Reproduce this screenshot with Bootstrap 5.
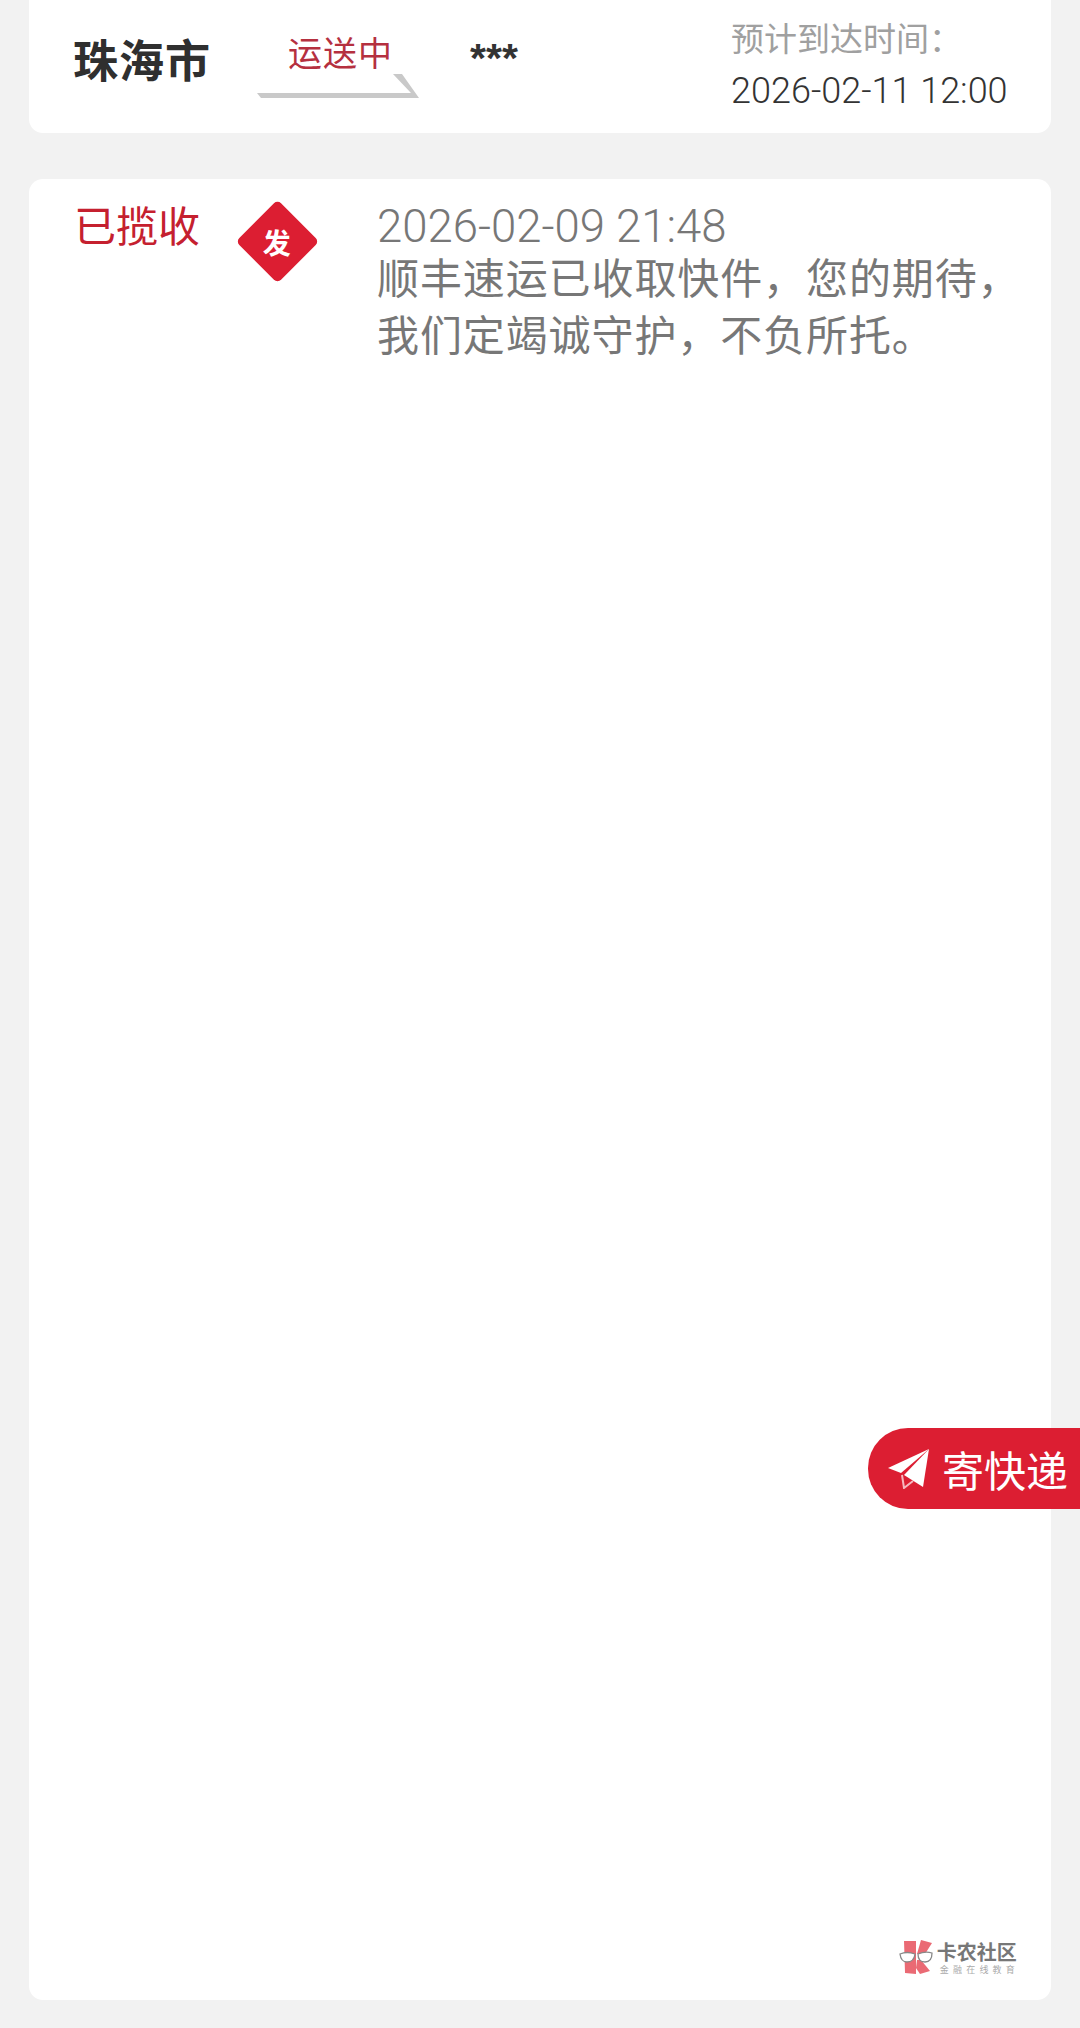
<!DOCTYPE html>
<html lang="zh-CN">
<head>
    <meta charset="UTF-8">
    <meta name="viewport" content="width=device-width, initial-scale=1.0">
    <title>物流详情</title>
    <link href="https://cdn.jsdelivr.net/npm/bootstrap@5.3.3/dist/css/bootstrap.min.css" rel="stylesheet">
    <style>
        body {
            background-color: #f2f2f2;
            font-family: "Noto Sans CJK SC", "Noto Sans", sans-serif;
            height: 2028px;
            overflow: hidden;
            position: relative;
        }
        .page-wrap { padding: 0 29px; }
        .panel-white { background: #fff; border-radius: 14px; }
        .panel-top { height: 133px; border-radius: 0 0 14px 14px; }
        .panel-main { height: 1821px; margin-top: 46px; padding: 26px 0 0 45px; position: relative; }

        .city-col { width: 228px; padding: 34px 0 0 44px; font-size: 45px; line-height: 50px; font-weight: 700; letter-spacing: 1px; color: #2f2f2f; white-space: nowrap; }
        .tab-col { width: 162px; padding-top: 34px; }
        .tab-label { font-size: 34px; line-height: 36px; letter-spacing: 1px; color: #b5303f; padding-left: 31px; white-space: nowrap; }
        .tab-edge { display: block; margin-top: 4px; }
        .stars-col { margin-left: 51px; padding-top: 38px; font-family: "Liberation Sans", sans-serif; font-size: 41px; line-height: 40px; font-weight: 700; color: #333; }
        .eta-col { width: 320px; padding-top: 17px; }
        .eta-label { font-size: 33px; line-height: 40px; color: #a0a0a0; white-space: nowrap; }
        .eta-time { font-family: Roboto, sans-serif; font-weight: 300; font-size: 36px; line-height: 40px; margin-top: 14px; color: #333; white-space: nowrap; }

        .status-col { width: 165px; margin-top: -4px; font-size: 42px; line-height: 46px; color: #c5202f; white-space: nowrap; }
        .diamond-col { width: 78px; height: 78px; margin-top: -3px; margin-left: -1px; }
        .diamond-shape { flex: none; width: 59px; height: 59px; background: #dc1e32; border-radius: 5px; transform: rotate(45deg); }
        .diamond-text { transform: rotate(-45deg); color: #fff; font-size: 28px; line-height: 1; font-weight: 700; }
        .info-col { margin-left: 61px; color: #777; }
        .info-time { font-family: Roboto, sans-serif; font-weight: 300; font-size: 45.5px; line-height: 44px; white-space: nowrap; }
        .info-text { font-size: 42px; line-height: 57px; letter-spacing: .9px; white-space: nowrap; margin-top: -2px; }

        .send-btn { position: absolute; left: 868px; top: 1428px; width: 212px; height: 81px; background: #dc1e32; border-radius: 40px 0 0 40px; color: #fff; padding-left: 20px; gap: 13px; }
        .send-btn span { font-size: 42px; line-height: 1; white-space: nowrap; }

        .wm-logo { position: absolute; right: 32px; bottom: 24px; gap: 2px; }
        .wm-name { font-size: 20px; line-height: 20px; font-weight: 700; color: #777; }
        .wm-sub { font-size: 9px; line-height: 10px; letter-spacing: 4.2px; color: #aaa; margin-top: 3px; padding-left: 3px; white-space: nowrap; }
    </style>
</head>
<body>
    <div class="page-wrap">
        <div class="panel-white panel-top d-flex align-items-start">
            <div class="city-col">珠海市</div>
            <div class="tab-col">
                <div class="tab-label">运送中</div>
                <svg class="tab-edge" width="162" height="24" viewBox="0 0 162 24">
                    <polygon points="136,0 145,0 162,24 4,24 0,19 154,19" fill="#c9c9c9"/>
                </svg>
            </div>
            <div class="stars-col">***</div>
            <div class="eta-col ms-auto">
                <div class="eta-label">预计到达时间：</div>
                <div class="eta-time">2026-02-11 12:00</div>
            </div>
        </div>

        <div class="panel-white panel-main d-flex align-items-start">
            <div class="status-col">已揽收</div>
            <div class="diamond-col d-flex align-items-center justify-content-center">
                <div class="diamond-shape d-flex align-items-center justify-content-center">
                    <span class="diamond-text">发</span>
                </div>
            </div>
            <div class="info-col">
                <div class="info-time">2026-02-09 21:48</div>
                <div class="info-text">顺丰速运已收取快件，您的期待，<br>我们定竭诚守护，不负所托。</div>
            </div>

            <div class="wm-logo d-flex align-items-center">
                <svg width="36" height="36" viewBox="0 0 36 36">
                    <polygon points="5,1 17,1 17,34 6,33" fill="#ea6a74"/>
                    <polygon points="22,0 33,3 26,14 18,14" fill="#ea6a74"/>
                    <polygon points="18,20 22,20 31,31 21,34 17,28" fill="#ea6a74"/>
                    <path d="M1 14 Q8 11 16 14 Q15 22 8 22 Q2 22 1 14Z M19 14 Q26 11 33 13 Q33 22 26 22 Q19 22 19 14Z" fill="#fff" stroke="#888" stroke-width="1.3"/>
                </svg>
                <div>
                    <div class="wm-name">卡农社区</div>
                    <div class="wm-sub">金融在线教育</div>
                </div>
            </div>
        </div>
    </div>

    <div class="send-btn d-flex align-items-center">
        <svg width="41" height="40" viewBox="0 0 41 40">
            <polygon points="41,0 0,19 13,24" fill="#fff"/>
            <polygon points="41,0 16,26 35,38" fill="#fff"/>
            <path d="M14 26 L16 39 L25 32" fill="none" stroke="#f6b7bf" stroke-width="2"/>
        </svg>
        <span>寄快递</span>
    </div>

    <script src="https://cdn.jsdelivr.net/npm/bootstrap@5.3.3/dist/js/bootstrap.bundle.min.js"></script>
</body>
</html>
